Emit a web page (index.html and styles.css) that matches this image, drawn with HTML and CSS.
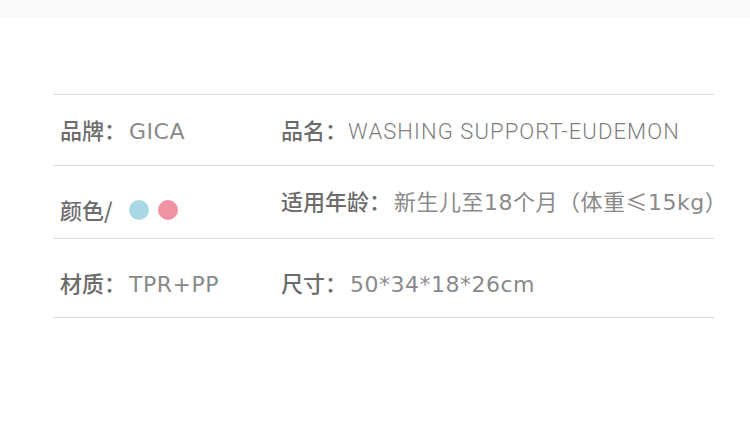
FILE: index.html
```html
<!DOCTYPE html>
<html lang="zh-CN">
<head>
<meta charset="utf-8">
<link rel="stylesheet" href="styles.css">
</head>
<body>
<div class="topbar"></div>
<section class="spec">
  <div class="row row-1">
    <div class="cell left"><span class="label">品牌：</span><span class="value">GICA</span></div>
    <div class="cell"><span class="label">品名：</span><span class="value thin">WASHING SUPPORT-EUDEMON</span></div>
  </div>
  <div class="row row-2">
    <div class="cell left low"><span class="label">颜色/</span><span class="dot blue"></span><span class="dot pink"></span></div>
    <div class="cell"><span class="label">适用年龄：</span><span class="value">新生儿至18个月（体重<span class="cjk">≤</span>15kg）</span></div>
  </div>
  <div class="row row-3">
    <div class="cell left"><span class="label">材质：</span><span class="value">TPR+PP</span></div>
    <div class="cell"><span class="label">尺寸：</span><span class="value">50*34*18*26cm</span></div>
  </div>
</section>
</body>
</html>
```
FILE: styles.css
```css
html, body {
  margin: 0;
  padding: 0;
  background: #ffffff;
}
body {
  width: 750px;
  height: 448px;
  overflow: hidden;
  font-family: "Noto Sans CJK SC", "Noto Sans", sans-serif;
  font-size: 22px;
  color: #777;
}
.topbar {
  height: 19px;
  background: #fafafa;
}
.spec {
  margin: 75px 36px 0 53px;
  border-top: 1px solid #dcdcdc;
}
.row {
  display: flex;
  align-items: center;
  box-sizing: border-box;
  border-bottom: 1px solid #dcdcdc;
}
.row-1 { height: 71px; padding-top: 1px; }
.row-2 { height: 73px; padding-bottom: 2px; }
.row-3 { height: 79px; padding-top: 11px; }
.cell {
  display: flex;
  align-items: baseline;
  white-space: nowrap;
  line-height: 1;
}
.left {
  flex: 0 0 auto;
  width: 221px;
  padding-left: 7px;
}
.low {
  padding-top: 16px;
}
.label {
  color: #6c6c6c;
  font-weight: 500;
}
.value {
  margin-left: 3px;
  color: #8a8a8a;
  font-family: "DejaVu Sans", "Noto Sans CJK SC", sans-serif;
  font-weight: 400;
  letter-spacing: 0.5px;
}
.value .cjk {
  font-family: "Noto Sans CJK SC", sans-serif;
}
.thin {
  margin-left: 1px;
  font-family: "Roboto", "Noto Sans CJK SC", sans-serif;
  font-weight: 300;
  letter-spacing: 1.1px;
  color: #808080;
}
.dot {
  display: inline-block;
  align-self: center;
  width: 20px;
  height: 20px;
  margin-top: 2px;
  border-radius: 50%;
}
.dot.blue { background: #a9d8e4; margin-left: 16px; }
.dot.pink { background: #f092a4; margin-left: 9px; }
```
